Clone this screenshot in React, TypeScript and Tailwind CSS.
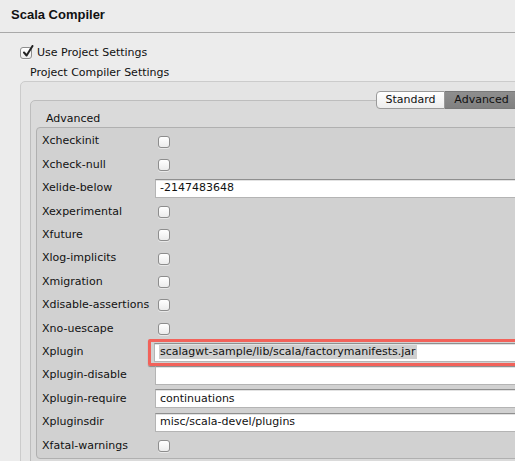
import React from "react";

const rows: { label: string; kind: "check" | "text"; value?: string; marked?: boolean }[] = [
  { label: "Xcheckinit", kind: "check" },
  { label: "Xcheck-null", kind: "check" },
  { label: "Xelide-below", kind: "text", value: "-2147483648" },
  { label: "Xexperimental", kind: "check" },
  { label: "Xfuture", kind: "check" },
  { label: "Xlog-implicits", kind: "check" },
  { label: "Xmigration", kind: "check" },
  { label: "Xdisable-assertions", kind: "check" },
  { label: "Xno-uescape", kind: "check" },
  { label: "Xplugin", kind: "text", value: "scalagwt-sample/lib/scala/factorymanifests.jar", marked: true },
  { label: "Xplugin-disable", kind: "text", value: "" },
  { label: "Xplugin-require", kind: "text", value: "continuations" },
  { label: "Xpluginsdir", kind: "text", value: "misc/scala-devel/plugins" },
  { label: "Xfatal-warnings", kind: "check" },
];

function Checkbox({ checked = false }: { checked?: boolean }) {
  return (
    <div className="relative h-[12px] w-[12px] rounded-[3px] border border-[#8d8d8d] bg-gradient-to-b from-[#ffffff] to-[#ececec] shadow-[0_1px_0_rgba(255,255,255,0.5)]">
      {checked && (
        <svg className="absolute -top-[3px] left-[1px] h-[13px] w-[12px]" viewBox="0 0 12 13">
          <path d="M2 7.5 L4.6 10.5 L10.5 1" fill="none" stroke="#222" strokeWidth="2" strokeLinecap="round" strokeLinejoin="round" />
        </svg>
      )}
    </div>
  );
}

function TextField({ value, marked }: { value: string; marked?: boolean }) {
  const field = (
    <div className="flex h-[19px] w-[400px] items-center border border-[#b4b4b4] border-t-[#8f8f8f] bg-white pl-[4px] shadow-[inset_0_1px_0_#e2e2e2]">
      {marked ? <span className="bg-[#cfcfcf] px-[1px] leading-[14px]">{value}</span> : <span>{value}</span>}
    </div>
  );
  if (!marked) return field;
  return (
    <div className="-ml-[7px] rounded-[2px] border-[3px] border-[#f2625a] px-[3px] py-[1px] shadow-[0_1px_1px_rgba(0,0,0,0.35)]">
      {field}
    </div>
  );
}

export default function App() {
  return (
    <div
      className="h-[461px] w-[515px] overflow-hidden bg-[#ececec] text-[11px] text-[#111]"
      style={{ fontFamily: '"DejaVu Sans", "Lucida Grande", sans-serif' }}
    >
      <div className="flex h-[33px] items-center border-b border-[#a9a9a9] pb-[2px] pl-[11px] font-['Liberation_Sans',sans-serif] text-[13px] font-bold">
        Scala Compiler
      </div>

      <div className="pl-[20px]">
        <div className="mt-[13px] flex h-[14px] items-center gap-[5px]">
          <Checkbox checked />
          <span>Use Project Settings</span>
        </div>
        <div className="mt-[6px] flex h-[14px] items-center pl-[10px]">Project Compiler Settings</div>

        <div className="mt-[1px] w-[560px] rounded-[5px] border border-[#cbcbcb] bg-[#e4e4e4] pl-[9px] pt-[9px]">
          <div className="relative z-10 flex h-[18px] pl-[346px]">
            <div className="flex h-[18px] w-[69px] items-center justify-center rounded-l-[4px] border border-[#9a9a9a] bg-gradient-to-b from-[#ffffff] to-[#ededed]">
              Standard
            </div>
            <div className="flex h-[18px] w-[80px] items-center justify-center border border-l-0 border-[#7a7a7a] bg-gradient-to-b from-[#8e8e8e] to-[#808080] pr-[6px]">
              Advanced
            </div>
          </div>

          <div className="-mt-[9px] rounded-[5px] border border-[#bdbdbd] bg-[#dadada] pb-[10px] pl-[5px] pt-[11px]">
            <div className="flex h-[14px] items-center pl-[10px]">Advanced</div>
            <div className="mt-[1px] rounded-[4px] border border-[#b0b0b0] bg-[#d1d1d1] pb-[1px] pl-[5px] pt-[2px]">
              {rows.map((r) => (
                <div key={r.label} className="flex h-[23.4px] items-center">
                  <div className="w-[113px] shrink-0">{r.label}</div>
                  {r.kind === "check" ? (
                    <div className="pl-[3px]">
                      <Checkbox />
                    </div>
                  ) : (
                    <TextField value={r.value ?? ""} marked={r.marked} />
                  )}
                </div>
              ))}
            </div>
          </div>
        </div>
      </div>
    </div>
  );
}
